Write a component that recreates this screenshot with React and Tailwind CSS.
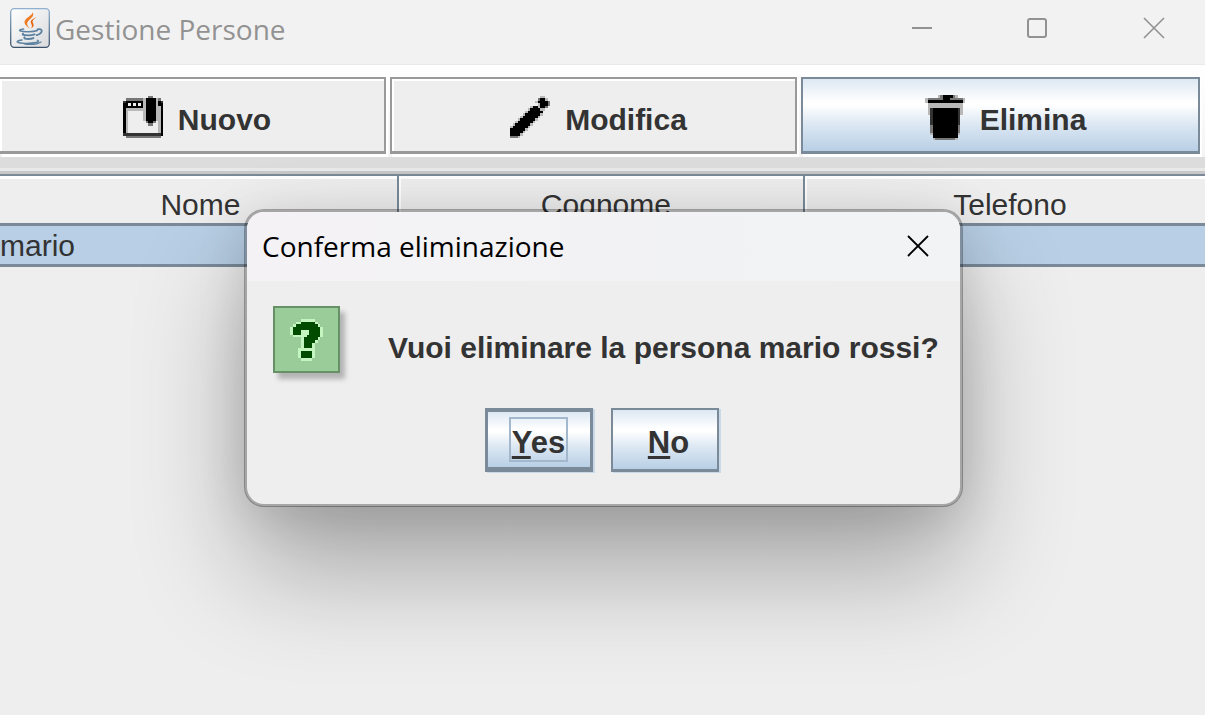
const COLORS = {
  "#": "#000000",
  d: "#333333",
  g: "#777777",
  l: "#b8b8b8",
  w: "#eeeeee",
  1: "#c4f5c1",
  2: "#004b00",
};

const QMARK = [
  "....11111...",
  "..11222221..",
  ".1222222221.",
  "122222222221",
  "122211122221",
  "122211122221",
  ".11111222221",
  "....1222221.",
  "....122221..",
  "....12221...",
  "....12221...",
  "...111111...",
  "...122221...",
  "...122221...",
  "...122221...",
  "....1111....",
];

const NEW = [
  "..........gg....",
  ".gggggggl####lg.",
  "d#######l####l#d",
  "##w#w#w#l####l##",
  "########l####ll#",
  "#llllllll####ll#",
  "#l......l####ll#",
  "#l......l####ll#",
  "#l......l####ll#",
  "#l......l####ll#",
  "#l.......g##g.l#",
  "#l........gg..l#",
  "#l............l#",
  "#l............l#",
  "#l............l#",
  "ddddddddddddddd#",
  ".gggggggggggggg.",
];

const EDIT = [
  "............ll..",
  "...........g##l.",
  "..........l####g",
  "...........l###g",
  "........l##l##g.",
  ".......l####ll..",
  "......l######...",
  ".....l######l...",
  "....l######l....",
  "...l######l.....",
  "..l######l......",
  ".l######l.......",
  "l######l........",
  "######l.........",
  "#####l..........",
  "####l...........",
  "gggl............",
];

const TRASH = [
  ".....lg####gl...",
  "lgggggg###gggggl",
  "l##############l",
  ".llllllllllllll.",
  ".llllllllllllll.",
  ".ld##########dl.",
  ".ld##########dl.",
  ".ld##########dl.",
  "..d##########d..",
  "..d##########d..",
  "..d##########d..",
  "..d##########d..",
  "..g##########g..",
  "..g##########g..",
  "..g##########g..",
  "..l##########l..",
  "...##########...",
  "...lggggggggl...",
];

function PixelArt({ rows, className }) {
  return (
    <svg
      viewBox={"0 0 " + rows[0].length + " " + rows.length}
      preserveAspectRatio="none"
      className={className}
      shapeRendering="crispEdges"
      aria-hidden="true"
    >
      {rows.flatMap((row, y) =>
        [...row].map((c, x) => (c === "." ? null : <rect key={x + "-" + y} x={x} y={y} width="1" height="1" fill={COLORS[c]} />))
      )}
    </svg>
  );
}

function JavaIcon() {
  return (
    <svg viewBox="0 0 40 40" className="size-10 shrink-0" aria-hidden="true">
      <defs>
        <linearGradient id="jb" x1="0" y1="0" x2="0" y2="1">
          <stop offset="0" stopColor="#8fb0cf" />
          <stop offset="1" stopColor="#3c526b" />
        </linearGradient>
        <linearGradient id="jf" x1="0" y1="0" x2="1" y2="1">
          <stop offset="0" stopColor="#ffffff" />
          <stop offset="1" stopColor="#d9dadc" />
        </linearGradient>
      </defs>
      <rect x="0.7" y="0.7" width="38.6" height="38.6" rx="3.5" fill="url(#jf)" stroke="url(#jb)" strokeWidth="1.3" />
      <path d="M22.8 4.200c1.500 3.500-1.200 5.600-3.800 8-2.800 2.700-2.300 4.800.9 8.300-4.600-3-6.900-5.800-4.300-9 2.300-2.700 6.200-4 7.200-7.300Z" fill="#ee7a22" />
      <path d="M26.600 9.300c-3.800 1.500-6.300 3.200-5.800 5.200.4 1.600 2.200 2.800.3 6 3.400-2.200 2.700-4.200 1.700-5.800-1-1.700.6-3.200 3.800-5.400Z" fill="#e8640c" />
      <g fill="none" stroke="#5b80a0" strokeLinecap="round">
        <path d="M13.500 21c-3.500.4-4.800 1.400-3 2 4 1.200 12.500.9 16.800-.6" strokeWidth="1.600" />
        <path d="M27.500 21.300c5.500-1.200 6 3.700-.8 5.900" strokeWidth="1.800" />
        <path d="M13 25.500c-1.200 1.400 1 1.900 4.800 1.900 3 0 5.200-.4 6.800-1" strokeWidth="1.900" />
        <path d="M14.500 29.300c-.8 1.300 1 1.700 3.700 1.700 2.400 0 4-.4 5.200-.9" strokeWidth="1.900" />
        <path d="M12 32c-4.500.4-6.500 2-3 2.700 5.400 1.200 15.500.7 18.800-.7 1-.5.700-1.200-.2-1.600" strokeWidth="1.500" />
        <path d="M15 36.200c6 .5 13 0 16-2.200" strokeWidth="1.200" />
      </g>
    </svg>
  );
}

const plain = "border-[#999] bg-[#eee] shadow-[inset_2px_2px_0_#fff,2px_3px_0_#fff]";
const blue =
  "border-[#7a8a99] bg-[linear-gradient(#dde8f3_0%,#fff_32%,#fff_36%,#dde8f3_62%,#b8cfe5_100%)] shadow-[2px_3px_0_#fff]";

function ToolButton({ icon, label, className }) {
  return (
    <button
      type="button"
      className={"flex h-[77px] items-center justify-center border-2 border-b-[3px] pt-1 pl-[10px] text-[30px] font-bold text-[#333] " + className}
    >
      {icon}
      <span className="ml-[15px] pt-1">{label}</span>
    </button>
  );
}

export default function App() {
  return (
    <div className="relative min-h-screen overflow-hidden bg-[#eee] font-['Liberation_Sans',Arial,sans-serif] text-[#333]">
      <header className="flex h-[65px] items-start border-b border-[#e9e9e9] bg-[#f2f2f2] pt-2 pl-[10px]">
        <JavaIcon />
        <h1 className="ml-[5px] font-['Open_Sans',sans-serif] text-[28px] leading-[42px] text-[#929292]">Gestione Persone</h1>
        <div className="mr-10 ml-auto flex h-10 items-center gap-[94px] text-[#929292]">
          <button type="button" aria-label="Riduci a icona">
            <svg viewBox="0 0 22 22" className="size-[22px]"><path d="M1 11h20" stroke="currentColor" strokeWidth="2" /></svg>
          </button>
          <button type="button" aria-label="Ingrandisci">
            <svg viewBox="0 0 22 22" className="size-[22px]"><rect x="1" y="2" width="18" height="18" rx="2" fill="none" stroke="currentColor" strokeWidth="2" /></svg>
          </button>
          <button type="button" aria-label="Chiudi">
            <svg viewBox="0 0 22 22" className="size-[22px]"><path d="M1 1l20 20M21 1L1 21" stroke="currentColor" strokeWidth="1.600" /></svg>
          </button>
        </div>
      </header>

      <nav className="grid grid-cols-[386fr_407fr_399fr] gap-1 bg-[linear-gradient(#fff,#f4f4f4)] pt-3 pr-[5px] pb-[3px]">
        <ToolButton icon={<PixelArt rows={NEW} className="h-[42px] w-10" />} label="Nuovo" className={"border-l-0 " + plain} />
        <ToolButton icon={<PixelArt rows={EDIT} className="h-[42px] w-10" />} label="Modifica" className={plain} />
        <ToolButton icon={<PixelArt rows={TRASH} className="h-[45px] w-10" />} label="Elimina" className={blue} />
      </nav>
      <div className="h-[11px] bg-[#dcdcdc]" />
      <div className="h-[3px] bg-[#e9e9e9]" />
      <div className="h-[3px] bg-[#c8c8c8]" />

      <table className="w-full table-fixed border-separate border-spacing-0 text-[30px]">
        <colgroup>
          <col className="w-[33.1%]" />
          <col className="w-[33.7%]" />
          <col className="w-[33.2%]" />
        </colgroup>
        <thead>
          <tr className="h-[52px]">
            <th className="border-t-2 border-r-2 border-b-[3px] border-[#7a8a99] p-0 pt-[11px] pl-1 font-normal leading-[36px] shadow-[inset_0_3px_0_#fff]">Nome</th>
            <th className="border-t-2 border-r-2 border-b-[3px] border-[#7a8a99] p-0 pt-[11px] pl-[10px] font-normal leading-[36px] shadow-[inset_2px_3px_0_#fff]">Cognome</th>
            <th className="border-t-2 border-b-[3px] border-[#7a8a99] p-0 pt-[11px] pl-[10px] font-normal leading-[36px] shadow-[inset_2px_3px_0_#fff]">Telefono</th>
          </tr>
        </thead>
        <tbody>
          <tr className="bg-[#b8cfe5]">
            <td className="border-b-[3px] border-[#7a8a99] p-0 pt-[2px] leading-[36px]">mario</td>
            <td className="border-b-[3px] border-[#7a8a99] p-0" />
            <td className="border-b-[3px] border-[#7a8a99] p-0" />
          </tr>
        </tbody>
      </table>

      <div className="absolute inset-x-0 top-[209px] flex justify-center pl-[2px]">
        <section
          role="dialog"
          aria-labelledby="dlg-title"
          className="w-[719px] overflow-hidden rounded-[20px] border-[3px] border-black/30 bg-[#eee] bg-clip-padding shadow-[0_64px_110px_rgba(0,0,0,0.3),0_6px_50px_rgba(0,0,0,0.12)]"
        >
          <div className="flex h-[69px] items-center justify-between bg-[linear-gradient(90deg,#f4f2f4,#f1f3f5)] pr-[31px] pb-[2px] pl-[15px] text-black">
            <h2 id="dlg-title" className="font-['Open_Sans',sans-serif] text-[28px]">Conferma eliminazione</h2>
            <button type="button" aria-label="Chiudi finestra">
              <svg viewBox="0 0 22 22" className="size-[22px]"><path d="M1 1l20 20M21 1L1 21" stroke="currentColor" strokeWidth="1.800" /></svg>
            </button>
          </div>
          <div className="flex items-start pt-[25px] pl-[26px]">
            <div className="flex size-[67px] shrink-0 items-center justify-center border-2 border-[#669066] bg-[#99cc99] shadow-[5px_6px_5px_rgba(0,0,0,0.25)]">
              <PixelArt rows={QMARK} className="h-[42px] w-[33px]" />
            </div>
            <p className="ml-12 pt-6 text-[30px] leading-[36px] font-bold whitespace-nowrap">Vuoi eliminare la persona mario rossi?</p>
          </div>
          <div className="flex justify-center gap-[18px] pt-[35px] pr-1 pb-8">
            <button type="button" className="flex h-[64px] w-[108px] items-center justify-center border-[3px] border-t-4 border-b-[5px] border-[#7a8a99] bg-[linear-gradient(#dde8f3_0%,#fff_32%,#fff_36%,#dde8f3_62%,#b8cfe5_100%)] text-[31px] font-bold shadow-[2px_1px_0_#c9d9e8]">
              <span className="border-2 border-[#a3b8cc] px-px pt-[6px] leading-[35px]"><u className="decoration-[3px] underline-offset-[3px]">Y</u>es</span>
            </button>
            <button type="button" className="flex h-[64px] w-[108px] items-center justify-center border-2 border-b-[3px] border-[#7a8a99] bg-[linear-gradient(#dde8f3_0%,#fff_32%,#fff_36%,#dde8f3_62%,#b8cfe5_100%)] pt-[7px] pl-2 text-[31px] font-bold shadow-[2px_1px_0_#c9d9e8]">
              <span className="leading-[36px]"><u className="decoration-[3px] underline-offset-[3px]">N</u>o</span>
            </button>
          </div>
        </section>
      </div>
    </div>
  );
}
